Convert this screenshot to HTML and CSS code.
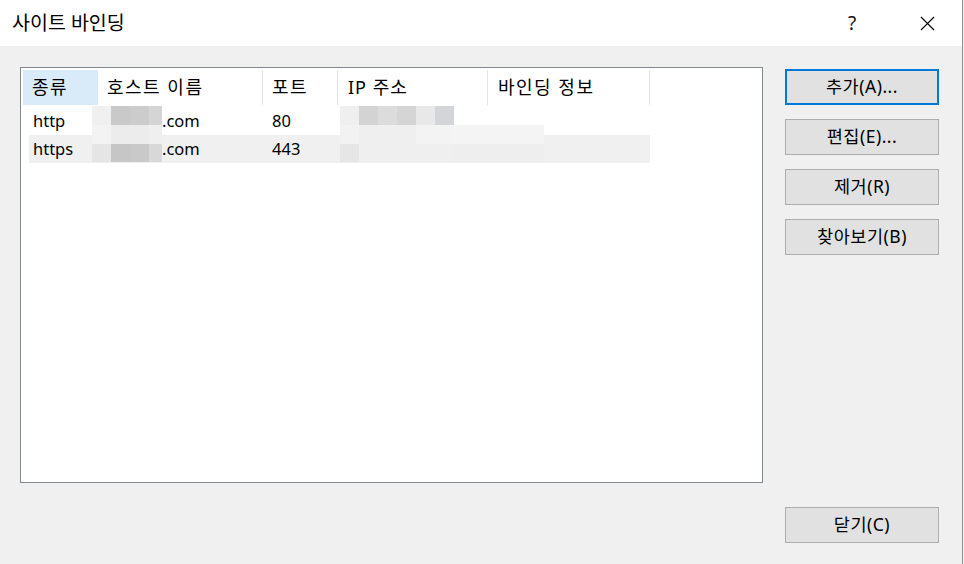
FILE: index.html
```html
<!DOCTYPE html>
<html lang="ko">
<head>
<meta charset="utf-8">
<title>사이트 바인딩</title>
<link rel="stylesheet" href="styles.css">
</head>
<body>
<div class="window">
  <div class="titlebar">
    <div class="title">사이트 바인딩</div>
    <div class="help">?</div>
    <div class="close">
      <svg width="15" height="15" viewBox="0 0 15 15"><path d="M1 1 L14 14 M14 1 L1 14" stroke="#000" stroke-width="1.1" fill="none"/></svg>
    </div>
  </div>
  <div class="content">
    <div class="list">
      <div class="header">
        <div class="col c1 hot">종류</div>
        <div class="col c2">호스트 이름</div>
        <div class="col c3">포트</div>
        <div class="col c4">IP 주소</div>
        <div class="col c5">바인딩 정보</div>
      </div>
      <div class="row first">
        <div class="cell r1">http</div>
        <div class="cell r2"><span class="masked"></span>.com</div>
        <div class="cell r3">80</div>
        <div class="cell r4"></div>
        <div class="cell r5"></div>
      </div>
      <div class="row alt">
        <div class="cell r1">https</div>
        <div class="cell r2"><span class="masked"></span>.com</div>
        <div class="cell r3">443</div>
        <div class="cell r4"></div>
        <div class="cell r5"></div>
      </div>
      <div class="mask mask-host">
        <i class="s1"></i><i class="s2"></i><i class="s3"></i><i class="s4"></i>
        <i class="s5"></i><i class="s6"></i><i class="s6"></i><i class="s7"></i>
        <i class="s8"></i><i class="s9"></i><i class="s2"></i><i class="s10"></i>
      </div>
      <div class="mask mask-ip">
        <i class="s7"></i><i class="s11"></i><i class="s12"></i><i class="s4"></i><i class="s13"></i><i class="s14"></i><i class="s0"></i>
        <i class="s15"></i><i class="s7"></i><i class="s7"></i><i class="s7"></i><i class="s5"></i><i class="s5"></i><i class="s16"></i>
        <i class="s8b"></i><i class="s7"></i><i class="s7"></i><i class="s7"></i><i class="s7"></i><i class="s7"></i><i class="s17"></i>
      </div>
    </div>
    <div class="buttons">
      <button class="btn default">추가(A)...</button>
      <button class="btn">편집(E)...</button>
      <button class="btn">제거(R)</button>
      <button class="btn">찾아보기(B)</button>
      <button class="btn close-btn">닫기(C)</button>
    </div>
  </div>
</div>
</body>
</html>
```

FILE: styles.css
```css
* { box-sizing: border-box; }
html, body { margin: 0; padding: 0; }
body {
  width: 964px;
  height: 564px;
  overflow: hidden;
  font-family: "Noto Sans", "Noto Sans CJK KR", sans-serif;
  color: #000;
  background: #f0f0f0;
}
.window {
  width: 963px;
  height: 564px;
  display: flex;
  flex-direction: column;
  border-right: 1px solid #8f8f8f;
}
.titlebar {
  height: 46px;
  background: #fff;
  display: flex;
  align-items: center;
  padding-left: 12px;
  flex: none;
}
.title {
  font-size: 19.5px;
  flex: 1;
  line-height: 1;
}
.help {
  font-size: 19px;
  width: 20px;
  margin-right: 52px;
  line-height: 1;
  color: #111;
}
.close {
  width: 15px;
  height: 15px;
  margin-right: 27px;
  display: flex;
}
.content {
  flex: 1;
  display: flex;
  padding: 21px 0 21px 20px;
  background: #f0f0f0;
}
.list {
  position: relative;
  width: 743px;
  height: 416px;
  background: #fff;
  border: 1px solid #828790;
  padding: 2px;
}
.header {
  display: flex;
  height: 35px;
  font-size: 18px;
  letter-spacing: 1.5px;
}
.col {
  height: 35px;
  line-height: 35px;
  padding-left: 9px;
  border-right: 1px solid #e5e5e5;
  white-space: nowrap;
}
.c1 { width: 75px; }
.c2 { width: 165px; }
.c3 { width: 75px; }
.c4 { width: 150px; padding-left: 10px; letter-spacing: 1px; }
.c5 { width: 162px; padding-left: 10px; }
.hot { background: #d9ebf9; border-right-color: #d9ebf9; }
.row {
  display: flex;
  height: 28px;
  margin-left: 6px;
  width: 621px;
  font-size: 16.5px;
  line-height: 28px;
}
.row.first { margin-top: 2px; }
.alt { background: #f0f0f0; }
.cell { white-space: nowrap; }
.r1 { width: 69px; padding-left: 4px; }
.r2 { width: 165px; padding-left: 9px; }
.r3 { width: 75px; padding-left: 9px; }
.r4 { width: 150px; }
.r5 { width: 162px; }
.masked {
  display: inline-block;
  width: 55px;
}
.mask {
  position: absolute;
  top: 38px;
  display: grid;
}
.mask i { display: block; }
.mask-host {
  left: 71px;
  grid-template-columns: 19px 19px 19px 13px;
  grid-template-rows: 19px 19px 18px;
}
.mask-ip {
  left: 319px;
  grid-template-columns: 19px 19px 19px 19px 19px 19px 90px;
  grid-template-rows: 19px 19px 18px;
}
.s0 { background: transparent; }
.s1 { background: #f0f0f0; }
.s2 { background: #c9c9c9; }
.s3 { background: #cccccc; }
.s4 { background: #d5d5d5; }
.s5 { background: #f3f3f3; }
.s6 { background: #ececec; }
.s7 { background: #efefef; }
.s8 { background: #e5e5e5; }
.s8b { background: #e6e6e6; }
.s9 { background: #c6c6c6; }
.s10 { background: #d8d8d8; }
.s11 { background: #d3d3d3; }
.s12 { background: #dcdcdc; }
.s13 { background: #e8e8e8; }
.s14 { background: #d3d5d8; }
.s15 { background: #f2f2f2; }
.s16 { background: #f4f4f4; }
.s17 { background: #eeeeee; }
.buttons {
  display: flex;
  flex-direction: column;
  gap: 14px;
  margin-left: 22px;
  padding-top: 2px;
}
.btn {
  width: 154px;
  height: 36px;
  background: #e1e1e1;
  border: 1px solid #adadad;
  font-family: "Noto Sans", "Noto Sans CJK KR", sans-serif;
  font-size: 17.5px;
  letter-spacing: 0.5px;
  color: #000;
  padding: 0;
  margin: 0;
  line-height: 1;
}
.btn.default {
  border: 2px solid #0078d7;
}
.close-btn {
  margin-top: auto;
}
```
